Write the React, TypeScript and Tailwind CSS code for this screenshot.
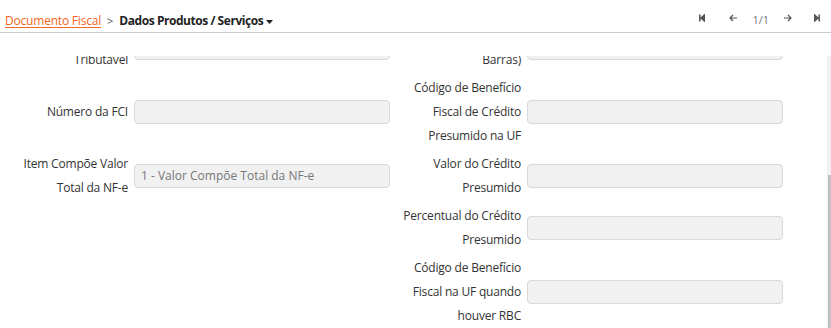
// Tela de detalhe do item da NF-e: cabeçalho com breadcrumb + paginação,
// e o formulário (já rolado) com os campos de crédito presumido.

import type { ReactNode } from "react";

const FONT = "font-['Open_Sans','Noto_Sans',sans-serif]";

export default function App() {
  return (
    <div className={`h-[328px] w-[831px] overflow-hidden bg-white text-[12px] text-[#333] ${FONT}`}>
      <Header />
      <div className="relative mt-[23px] h-[272px] overflow-hidden">
        <div className="-mt-[32px] grid grid-cols-[128px_256px_125px_256px] gap-x-[6px] gap-y-[4px]">
          <Label lines={["Unidade", "Tributável"]} />
          <Field />
          <Label lines={["GTIN (Código de", "Barras)"]} />
          <Field />

          <Label lines={["Número da FCI"]} />
          <Field />
          <Label lines={["Código de Benefício", "Fiscal de Crédito", "Presumido na UF"]} />
          <Field />

          <Label lines={["Item Compõe Valor", "Total da NF-e"]} />
          <Field value="1 - Valor Compõe Total da NF-e" />
          <Label lines={["Valor do Crédito", "Presumido"]} />
          <Field />

          <div />
          <div />
          <Label lines={["Percentual do Crédito", "Presumido"]} />
          <Field />

          <div />
          <div />
          <Label lines={["Código de Benefício", "Fiscal na UF quando", "houver RBC"]} />
          <Field />
        </div>
        <ScrollBar />
      </div>
    </div>
  );
}

// ── Components ────────────────────────────────────────────────────────────────

function Header() {
  return (
    <header className="flex h-[33px] items-center justify-between border-b border-[#cccccc] pl-[5px] pr-[11px]">
      <nav className="flex items-center gap-[6px] pt-[10px]">
        <a className="tracking-[-0.2px] text-[#f26522] underline underline-offset-2">Documento Fiscal</a>
        <span className="text-[11px] text-[#555]">&gt;</span>
        <span className="flex items-center gap-[3px] font-bold tracking-[-0.45px] text-[#222]">
          Dados Produtos / Serviços
          <svg width="7" height="4" viewBox="0 0 7 4" className="mt-[1px]">
            <path d="M0 0h7L3.5 4z" fill="#222" />
          </svg>
        </span>
      </nav>
      <div className="flex items-center pt-[4px]">
        <NavIcon w={6}>
          <path d="M0.8 0.5v7M2 4l4-3.5v7z" stroke="#555" strokeWidth="1.5" fill="#555" />
        </NavIcon>
        <NavIcon w={8} className="ml-[24px]">
          <path d="M8 4H1M4 1L1 4l3 3" stroke="#555" strokeWidth="1.2" fill="none" />
        </NavIcon>
        <span className="mx-[15px] mt-[5px] text-[11px] text-[#777]">1/1</span>
        <NavIcon w={8}>
          <path d="M0 4h7M4 1l3 3-3 3" stroke="#555" strokeWidth="1.2" fill="none" />
        </NavIcon>
        <NavIcon w={6} className="ml-[22px]">
          <path d="M5.2 0.5v7M4 4L0 0.5v7z" stroke="#555" strokeWidth="1.5" fill="#555" />
        </NavIcon>
      </div>
    </header>
  );
}

function NavIcon({ children, w, className = "" }: { children: ReactNode; w: number; className?: string }) {
  return (
    <svg width={w} height="8" viewBox={`0 0 ${w} 8`} className={className}>
      {children}
    </svg>
  );
}

function Label({ lines }: { lines: string[] }) {
  return (
    <div className="flex flex-col justify-center text-right leading-[24px] tracking-[-0.2px] whitespace-nowrap">
      {lines.map((l) => (
        <span key={l}>{l}</span>
      ))}
    </div>
  );
}

function Field({ value }: { value?: string }) {
  return (
    <div className="flex items-center">
      <div className="flex h-[24px] w-full items-center rounded-[4px] border border-[#d9d9d9] bg-[#f1f1f1] px-[6px] text-[#777]">
        {value}
      </div>
    </div>
  );
}

function ScrollBar() {
  return (
    <div className="absolute top-0 right-0 flex h-full w-[4px] flex-col bg-[#f0f0f0]">
      <div className="mt-[119px] ml-[1px] flex-1 bg-[#c1c1c1]" />
    </div>
  );
}
